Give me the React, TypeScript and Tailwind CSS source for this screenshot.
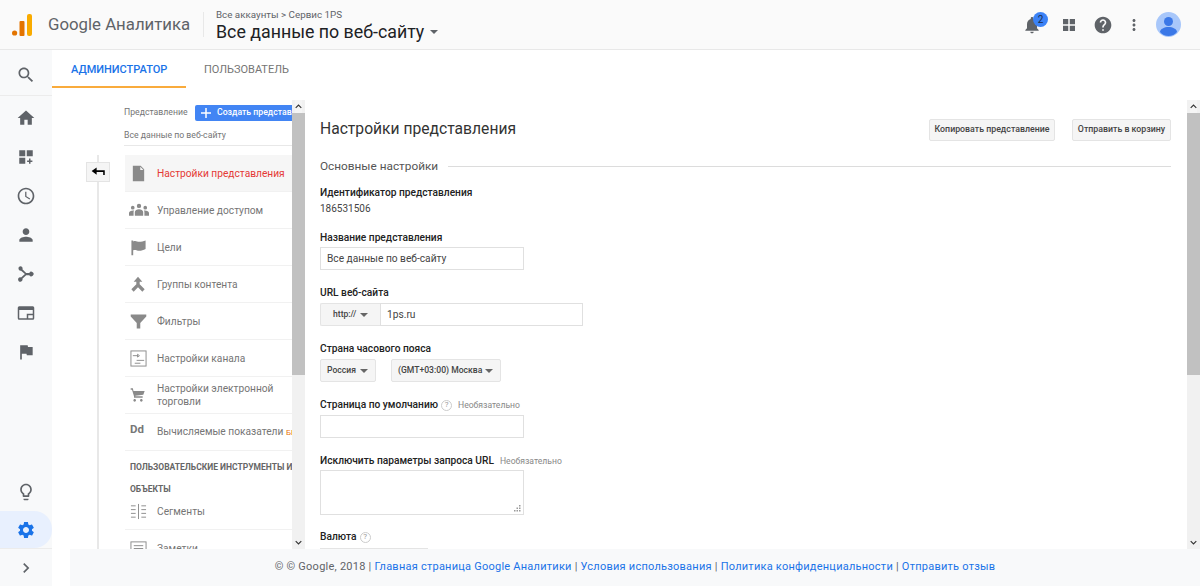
import type { ReactNode } from 'react';

const P = {
  search: 'M15.5 14h-.79l-.28-.27C15.41 12.59 16 11.11 16 9.5 16 5.91 13.09 3 9.5 3S3 5.91 3 9.5 5.91 16 9.5 16c1.61 0 3.09-.59 4.23-1.57l.27.28v.79l5 4.99L20.49 19l-4.99-5zm-6 0C7.01 14 5 11.99 5 9.5S7.01 5 9.5 5 14 7.01 14 9.5 11.99 14 9.5 14z',
  home: 'M10 20v-6h4v6h5v-8h3L12 3 2 12h3v8z',
  dash: 'M3 3h8v8H3zM13 3h8v8h-8zM3 13h8v8H3zM16 14h2v2.5h2.5v2H18V21h-2v-2.5h-2.5v-2H16z',
  clock: 'M11.99 2C6.47 2 2 6.48 2 12s4.47 10 9.99 10C17.52 22 22 17.52 22 12S17.52 2 11.99 2zM12 20c-4.42 0-8-3.58-8-8s3.58-8 8-8 8 3.58 8 8-3.58 8-8 8zM12.5 7H11v6l5.25 3.15.75-1.23-4.5-2.67z',
  person: 'M12 12c2.21 0 4-1.79 4-4s-1.79-4-4-4-4 1.79-4 4 1.79 4 4 4zm0 2c-2.67 0-8 1.34-8 4v2h16v-2c0-2.66-5.33-4-8-4z',
  flow: 'M4.500 1.500a3 3 0 0 1 2.700 4.300l5 4.700h4.200a3 3 0 1 1 0 3h-4.200l-5 4.700A3 3 0 1 1 5.400 16.500l5.200-4.500-5.200-4.500A3 3 0 0 1 4.500 1.500z',
  display: 'M3 3h18a2 2 0 0 1 2 2v14a2 2 0 0 1-2 2H3a2 2 0 0 1-2-2V5a2 2 0 0 1 2-2zm0 5v11h10v-6h8V8H3zm12 7v4h6v-4h-6z',
  flag: 'M14.4 6L14 4H5v17h2v-7h5.6l.4 2h7V6z',
  bulb: 'M9 21c0 .55.45 1 1 1h4c.55 0 1-.45 1-1v-1H9v1zm3-19C8.14 2 5 5.14 5 9c0 2.38 1.19 4.47 3 5.74V17c0 .55.45 1 1 1h6c.55 0 1-.45 1-1v-2.26c1.81-1.27 3-3.36 3-5.74 0-3.86-3.14-7-7-7zm2.85 11.1l-.85.6V16h-4v-2.3l-.85-.6C7.8 12.16 7 10.63 7 9c0-2.76 2.24-5 5-5s5 2.24 5 5c0 1.63-.8 3.16-2.15 4.1z',
  gear: 'M19.14 12.94c.04-.3.06-.61.06-.94 0-.32-.02-.64-.07-.94l2.03-1.58c.18-.14.23-.41.12-.61l-1.92-3.32c-.12-.22-.37-.29-.59-.22l-2.39.96c-.5-.38-1.03-.7-1.62-.94l-.36-2.54c-.04-.24-.24-.41-.48-.41h-3.84c-.24 0-.43.17-.47.41l-.36 2.54c-.59.24-1.13.57-1.62.94l-2.39-.96c-.22-.08-.47 0-.59.22L2.74 8.87c-.12.21-.08.47.12.61l2.03 1.58c-.05.3-.09.63-.09.94s.02.64.07.94l-2.03 1.58c-.18.14-.23.41-.12.61l1.92 3.32c.12.22.37.29.59.22l2.39-.96c.5.38 1.03.7 1.62.94l.36 2.54c.05.24.24.41.48.41h3.84c.24 0 .44-.17.47-.41l.36-2.54c.59-.24 1.13-.56 1.62-.94l2.39.96c.22.08.47 0 .59-.22l1.92-3.32c.12-.22.07-.47-.12-.61l-2.01-1.58zM12 15.6c-1.98 0-3.6-1.62-3.6-3.6s1.62-3.6 3.6-3.6 3.6 1.62 3.6 3.6-1.62 3.6-3.6 3.6z',
  chevron: 'M8.6 16.6L13.2 12 8.6 7.4 10 6l6 6-6 6z',
  bell: 'M12 22c1.1 0 2-.9 2-2h-4c0 1.1.89 2 2 2zm6-6v-5c0-3.07-1.64-5.64-4.5-6.32V4c0-.83-.67-1.5-1.5-1.5s-1.5.67-1.5 1.5v.68C7.63 5.36 6 7.92 6 11v5l-2 2v1h16v-1l-2-2z',
  grid: 'M4 4h7v7H4zM13 4h7v7h-7zM4 13h7v7H4zM13 13h7v7h-7z',
  help: 'M12 2C6.48 2 2 6.48 2 12s4.48 10 10 10 10-4.48 10-10S17.52 2 12 2zm1 17h-2v-2h2v2zm2.07-7.75l-.9.92C13.45 12.9 13 13.5 13 15h-2v-.5c0-1.1.45-2.1 1.17-2.83l1.24-1.26c.37-.36.59-.86.59-1.41 0-1.1-.9-2-2-2s-2 .9-2 2H8c0-2.21 1.79-4 4-4s4 1.79 4 4c0 .88-.36 1.68-.93 2.25z',
  dots: 'M12 8c1.1 0 2-.9 2-2s-.9-2-2-2-2 .9-2 2 .9 2 2 2zm0 2c-1.1 0-2 .9-2 2s.9 2 2 2 2-.9 2-2-.9-2-2-2zm0 6c-1.1 0-2 .9-2 2s.9 2 2 2 2-.9 2-2-.9-2-2-2z',
  doc: 'M4 1h11l5 5v17H4zM14.500 2.500V7H19z',
  people: 'M12 4.500a2.600 2.600 0 1 1 0 5.200 2.600 2.600 0 0 1 0-5.200zM4.500 7a2.200 2.200 0 1 1 0 4.400 2.200 2.200 0 0 1 0-4.400zm15 0a2.200 2.200 0 1 1 0 4.400 2.200 2.200 0 0 1 0-4.400zM7 19v-4.500c0-2 2.500-3.500 5-3.500s5 1.500 5 3.500V19zM0 19v-3.500c0-1.500 2.400-3 5-3 .6 0 .9.100 1.200.200-.5.600-.7 1.200-.7 1.800V19zm24 0h-5.500v-4.500c0-.6-.2-1.200-.7-1.800.3-.100.7-.200 1.200-.200 2.600 0 5 1.500 5 3z',
  goal: 'M2 2h2.500v1.500C8 1.500 10 4 13 4c3 0 6-1 9-2v12c-3 1.500-6 2.500-9 2.500-3 0-5.500-2-8.500-.5V23H2z',
  merge: 'M12 1l6.500 7.500h-4v4L22 20l-3.500 3.500-6.500-6.500-6.500 6.500L2 20l7.500-7.500v-4h-4z',
  filter: 'M1 2h22v3L14.500 14v8h-5v-8L1 5z',
  cart: 'M7 18c-1.1 0-1.99.9-1.99 2S5.900 22 7 22s2-.9 2-2-.9-2-2-2zm10 0c-1.100 0-1.990.9-1.990 2s.890 2 1.990 2 2-.9 2-2-.9-2-2-2zM1 2v2h2l3 10v2h13v-2H8v-1l12-1.500L22 6H5.200l-.9-4z',
  arrow: 'M9 4v4.500h13V16h-2.500v-5H9v4.500L1 9.700z',
};

function Icon({ d, className }: { d: string; className: string }) {
  return (
    <svg viewBox="0 0 24 24" className={className} fill="currentColor">
      <path d={d} />
    </svg>
  );
}

function RailItem({ d, size = 'w-5 h-5' }: { d: string; size?: string }) {
  return (
    <div className="h-[39px] flex items-center justify-center text-[#5f6368]">
      <Icon d={d} className={size} />
    </div>
  );
}

function Caret({ className = 'border-t-[#5f6368]' }: { className?: string }) {
  return <span className={`inline-block shrink-0 w-0 h-0 border-x-[4px] border-x-transparent border-t-[4px] ${className}`} />;
}

function MenuItem({ icon, active, children }: { icon: ReactNode; active?: boolean; children: ReactNode }) {
  return (
    <div className={`h-[37px] ml-px shrink-0 flex items-center border-b border-[#f1f1f1] ${active ? 'bg-[#f6f6f6]' : ''}`}>
      <div className="w-[32px] shrink-0 pl-[5px] flex justify-start text-[#8a8a8a]">{icon}</div>
      <div className={`text-[10.2px] leading-[13px] whitespace-nowrap ${active ? 'text-[#e53935]' : 'text-[#757575]'}`}>{children}</div>
    </div>
  );
}

function Scrollbar() {
  return (
    <div className="w-[13px] shrink-0 bg-[#f1f1f1] flex flex-col items-center">
      <div className="h-[13px] shrink-0 bg-[#f5f5f5] flex items-center justify-center">
        <svg viewBox="0 0 10 6" className="w-[7px] h-[5px]" fill="none" stroke="#333" strokeWidth="1.6"><path d="M1 5l4-4 4 4" /></svg>
      </div>
      <div className="w-full h-[262px] shrink-0 bg-[#c1c1c1]" />
      <div className="flex-1" />
      <div className="h-[13px] shrink-0 flex items-center justify-center">
        <svg viewBox="0 0 10 6" className="w-[7px] h-[5px]" fill="none" stroke="#333" strokeWidth="1.6"><path d="M1 1l4 4 4-4" /></svg>
      </div>
    </div>
  );
}

function Label({ children }: { children: ReactNode }) {
  return <div className="text-[10.2px] leading-[14px] font-medium text-[#222] whitespace-nowrap">{children}</div>;
}

function Hint() {
  return <span className="inline-flex w-[11px] h-[11px] rounded-full border border-[#ccc] text-[8px] text-[#999] items-center justify-center font-normal">?</span>;
}

function SelectBtn({ className, children }: { className: string; children: ReactNode }) {
  return (
    <div className={`h-[23px] flex items-center justify-between bg-[#f5f5f5] border border-[#e4e4e4] rounded-[2px] text-[8.6px] font-medium text-[#444] whitespace-nowrap ${className}`}>
      <span>{children}</span>
      <Caret className="border-t-[#666]" />
    </div>
  );
}

export default function App() {
  return (
    <div className="w-[1200px] h-[586px] overflow-hidden flex flex-col bg-white font-['Roboto',sans-serif]">
      {/* top bar */}
      <header className="h-[50px] shrink-0 flex items-center bg-[#fafafa] border-b border-[#e8e8e8] pl-3 pr-[19px]">
        <svg viewBox="0 0 20 22" className="w-5 h-[22px] shrink-0">
          <circle cx="2.600" cy="19" r="2.600" fill="#e37400" />
          <rect x="7.500" y="7" width="5" height="15" rx="1" fill="#e37400" />
          <rect x="15" y="0" width="5" height="22" rx="2" fill="#f9ab00" />
        </svg>
        <div className="ml-4 text-[16.8px] pt-px text-[#5f6368] whitespace-nowrap w-[155px]">Google Аналитика</div>
        <div className="w-px h-[25px] bg-[#e8e8e8]" />
        <div className="ml-3 pt-px flex flex-col">
          <div className="text-[9.8px] leading-[13px] text-[#5f6368]">Все аккаунты &gt; Сервис 1PS</div>
          <div className="flex items-center gap-[6px] text-[17.8px] leading-[21px] text-[#202124]">
            Все данные по веб-сайту
            <Caret />
          </div>
        </div>
        <div className="ml-auto flex items-center text-[#5f6368]">
          <div className="relative">
            <Icon d={P.bell} className="w-5 h-5" />
            <span className="absolute -top-[3px] left-[11px] w-[15px] h-[15px] rounded-full bg-[#3b82f6] text-[#1a2a4a] text-[10px] flex items-center justify-center">2</span>
          </div>
          <Icon d={P.grid} className="ml-[18px] w-[18px] h-[18px]" />
          <Icon d={P.help} className="ml-[15px] w-5 h-5" />
          <Icon d={P.dots} className="ml-[12px] w-[18px] h-[18px]" />
          <svg viewBox="0 0 25 25" className="ml-[13px] w-[25px] h-[25px]">
            <circle cx="12.500" cy="12.500" r="12.500" fill="#a8c7fa" />
            <circle cx="12.500" cy="9.500" r="4.500" fill="#3b78e7" />
            <path d="M4 20c0-3 4.500-5 8.500-5s8.500 2 8.500 5c-2 2.500-5 4-8.500 4S6 22.500 4 20z" fill="#3b78e7" />
          </svg>
        </div>
      </header>

      <div className="flex-1 min-h-0 flex">
        {/* left rail */}
        <aside className="w-[52px] shrink-0 bg-[#f8f9fa] flex flex-col">
          <div className="h-[46px] shrink-0 pt-1 flex items-center justify-center border-b border-[#ececec] text-[#5f6368]">
            <Icon d={P.search} className="w-5 h-5" />
          </div>
          <div className="pt-[2px]">
            <RailItem d={P.home} />
            <RailItem d={P.dash} size="w-[18px] h-[18px]" />
            <RailItem d={P.clock} />
            <RailItem d={P.person} />
            <RailItem d={P.flow} size="w-[18px] h-[18px]" />
            <RailItem d={P.display} size="w-[18px] h-[18px]" />
            <RailItem d={P.flag} />
          </div>
          <div className="mt-auto">
            <div className="h-[39px] flex items-center justify-center text-[#5f6368]">
              <Icon d={P.bulb} className="w-5 h-5" />
            </div>
            <div className="h-[37px] rounded-r-[18px] bg-[#e8f0fe] flex items-center justify-center text-[#1a73e8]">
              <Icon d={P.gear} className="w-5 h-5" />
            </div>
            <div className="h-[38px] border-t border-[#ececec] flex items-center justify-center text-[#5f6368]">
              <Icon d={P.chevron} className="w-5 h-5" />
            </div>
          </div>
        </aside>

        <main className="flex-1 min-w-0 flex flex-col">
          {/* tabs */}
          <div className="h-[38px] shrink-0 flex">
            <div className="w-[134px] h-full border-b-2 border-[#f9ab3c] pl-[19px] pt-[13px] text-[11px] leading-[14px] font-medium text-[#1a73e8]">АДМИНИСТРАТОР</div>
            <div className="pl-[18px] pt-[13px] text-[11px] leading-[14px] text-[#757575]">ПОЛЬЗОВАТЕЛЬ</div>
          </div>

          <div className="flex-1 min-h-0 flex mt-3">
            {/* collapse rail */}
            <div className="w-[72px] shrink-0 relative">
              <div className="absolute left-[45px] top-[55px] bottom-0 w-[2px] bg-[#e8e8e8]" />
              <div className="absolute left-[34px] top-[62px] w-[24px] h-[20px] bg-[#f5f5f5] border border-[#e4e4e4] flex items-center justify-center text-black">
                <Icon d={P.arrow} className="w-[15px] h-[15px]" />
              </div>
            </div>

            {/* view column */}
            <div className="w-[168px] shrink-0 overflow-hidden flex flex-col">
              <div className="h-[27px] shrink-0 flex items-center text-[8.7px] text-[#757575] whitespace-nowrap -mt-[1px]">
                <span className="w-[71px] shrink-0">Представление</span>
                <span className="h-[16px] pl-[6px] pr-2 flex items-center gap-[6px] bg-[#4285f4] rounded-[2px] text-white font-medium">
                  <svg viewBox="0 0 10 10" className="w-[10px] h-[10px]" fill="none" stroke="#fff" strokeWidth="1.500"><path d="M5 0v10M0 5h10" /></svg>
                  Создать представление
                </span>
              </div>
              <div className="h-[20px] shrink-0 border-b border-[#e8e8e8] text-[8.7px] text-[#757575] flex items-center whitespace-nowrap">Все данные по веб-сайту</div>
              <div className="h-[9px] shrink-0" />
              <MenuItem active icon={<Icon d={P.doc} className="w-[17px] h-[17px]" />}>Настройки представления</MenuItem>
              <MenuItem icon={<Icon d={P.people} className="w-[20px] h-[20px] -ml-px" />}>Управление доступом</MenuItem>
              <MenuItem icon={<Icon d={P.goal} className="w-[17px] h-[17px]" />}>Цели</MenuItem>
              <MenuItem icon={<Icon d={P.merge} className="w-[16px] h-[16px]" />}>Группы контента</MenuItem>
              <MenuItem icon={<Icon d={P.filter} className="w-[17px] h-[17px]" />}>Фильтры</MenuItem>
              <MenuItem icon={
                <svg viewBox="0 0 18 18" className="w-[17px] h-[17px]" fill="none" stroke="currentColor"><rect x="1" y="1" width="16" height="16" /><path d="M3 6h5M8 4.500l2 1.500-2 1.500zM7 11h8M5 14h6" /></svg>
              }>Настройки канала</MenuItem>
              <MenuItem icon={<Icon d={P.cart} className="w-[16px] h-[16px]" />}>Настройки электронной<br />торговли</MenuItem>
              <MenuItem icon={<span className="text-[11.5px] font-bold text-[#777] -mt-1">Dd</span>}>Вычисляемые показатели <span className="text-[#e8710a] text-[8px]">БЕТА</span></MenuItem>
              <div className="shrink-0 pl-[6px] pt-[5px] -mb-[7px] text-[8.5px] leading-[22px] font-bold text-[#666] whitespace-nowrap">
                <div>ПОЛЬЗОВАТЕЛЬСКИЕ ИНСТРУМЕНТЫ И</div>
                <div>ОБЪЕКТЫ</div>
              </div>
              <MenuItem icon={
                <svg viewBox="0 0 18 18" className="w-[17px] h-[17px]" fill="none" stroke="currentColor"><path d="M9 1v16M1 3h5M1 7h5M1 11h5M1 15h5M12 3h5M12 7h5M12 11h5M12 15h5" /></svg>
              }>Сегменты</MenuItem>
              <MenuItem icon={
                <svg viewBox="0 0 18 18" className="w-[17px] h-[17px]" fill="none" stroke="currentColor"><rect x="1" y="2" width="16" height="14" /><path d="M4 6h10M4 9h10M4 12h10" /></svg>
              }>Заметки</MenuItem>
            </div>

            <Scrollbar />

            {/* settings form */}
            <div className="flex-1 min-w-0 overflow-hidden pl-[15px] pr-[16px]">
              <div className="flex items-start justify-between pt-[19px]">
                <h1 className="text-[15.65px] leading-[20px] text-[#333]">Настройки представления</h1>
                <div className="flex gap-[17px]">
                  <div className="w-[126px] h-[22px] flex items-center justify-center bg-[#f5f5f5] border border-[#e4e4e4] rounded-[2px] text-[8.8px] font-medium text-[#444] whitespace-nowrap">Копировать представление</div>
                  <div className="w-[99px] h-[22px] flex items-center justify-center bg-[#f5f5f5] border border-[#e4e4e4] rounded-[2px] text-[8.8px] font-medium text-[#444] whitespace-nowrap">Отправить в корзину</div>
                </div>
              </div>
              <div className="mt-[18px] flex items-center gap-[10px] text-[11.8px] leading-[14px] text-[#555]">
                Основные настройки
                <div className="flex-1 h-px bg-[#dcdcdc]" />
              </div>
              <div className="mt-[13px]"><Label>Идентификатор представления</Label></div>
              <div className="mt-[2px] text-[10px] leading-[14px] text-[#444]">186531506</div>
              <div className="mt-[15px]"><Label>Название представления</Label></div>
              <div className="mt-[2px] w-[204px] h-[23px] border border-[#e0e0e0] pl-[6px] flex items-center text-[10.2px] text-[#444]">Все данные по веб-сайту</div>
              <div className="mt-[16px]"><Label>URL веб-сайта</Label></div>
              <div className="mt-[3px] flex w-[263px]">
                <SelectBtn className="w-[60px] px-[12px] rounded-r-none border-r-0">http://</SelectBtn>
                <div className="flex-1 h-[23px] border border-[#e0e0e0] pl-[6px] flex items-center text-[10.2px] text-[#444]">1ps.ru</div>
              </div>
              <div className="mt-[16px]"><Label>Страна часового пояса</Label></div>
              <div className="mt-[3px] flex gap-[15px]">
                <SelectBtn className="w-[56px] pl-[6px] pr-[7px]">Россия</SelectBtn>
                <SelectBtn className="w-[110px] pl-[6px] pr-[7px]">(GMT+03:00) Москва</SelectBtn>
              </div>
              <div className="mt-[16px] flex items-center gap-[3px]">
                <Label>Страница по умолчанию</Label>
                <Hint />
                <span className="ml-[3px] text-[8.6px] text-[#888]">Необязательно</span>
              </div>
              <div className="mt-[3px] w-[204px] h-[23px] border border-[#e0e0e0]" />
              <div className="mt-[16px] flex items-center gap-[6px]">
                <Label>Исключить параметры запроса URL</Label>
                <span className="text-[8.6px] text-[#888]">Необязательно</span>
              </div>
              <div className="relative mt-[2px] w-[204px] h-[45px] border border-[#e0e0e0]">
                <svg viewBox="0 0 7 7" className="absolute right-[2px] bottom-[2px] w-[7px] h-[7px]" fill="#999"><rect x="5" y="0" width="1.500" height="1.500" /><rect x="2.500" y="2.500" width="1.500" height="1.500" /><rect x="5" y="2.500" width="1.500" height="1.500" /><rect x="0" y="5" width="1.500" height="1.500" /><rect x="2.500" y="5" width="1.500" height="1.500" /><rect x="5" y="5" width="1.500" height="1.500" /></svg>
              </div>
              <div className="mt-[15px] flex items-center gap-[3px]">
                <Label>Валюта</Label>
                <Hint />
              </div>
              <div className="mt-[4px] w-[108px] h-[23px] bg-[#f5f5f5] border border-[#e4e4e4]" />
            </div>

            <Scrollbar />
          </div>

          {/* footer */}
          <footer className="h-[37px] shrink-0 ml-[18px] bg-[#f8f9fa] flex items-center justify-center">
            <p className="text-[11px] text-[#5f6368] tracking-[0.24px] whitespace-nowrap">
              © © Google, 2018 | <span className="text-[#1a73e8]">Главная страница Google Аналитики</span> | <span className="text-[#1a73e8]">Условия использования</span> | <span className="text-[#1a73e8]">Политика конфиденциальности</span> | <span className="text-[#1a73e8]">Отправить отзыв</span>
            </p>
          </footer>
        </main>
      </div>
    </div>
  );
}
